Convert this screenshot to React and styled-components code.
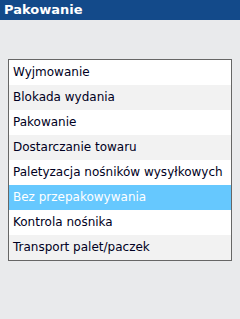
import React from 'react'
import styled, { createGlobalStyle } from 'styled-components'

const Global = createGlobalStyle`
  html, body {
    margin: 0;
    padding: 0;
    background: #e9eaec;
  }
`

const Page = styled.div`
  width: 240px;
  height: 319px;
  background: #e9eaec;
  font-family: "DejaVu Sans", Verdana, sans-serif;
`

const Header = styled.div`
  height: 20px;
  background: #134a8a;
  color: #ffffff;
  font-weight: bold;
  font-size: 13px;
  line-height: 20px;
  padding-left: 4px;
`

const Body = styled.div`
  padding: 39px 8px 0 8px;
`

const List = styled.div`
  border: 1px solid #666666;
  background: #ffffff;
  display: flex;
  flex-direction: column;
`

const Item = styled.div`
  height: 25px;
  line-height: 25px;
  padding-left: 4px;
  font-size: 12px;
  white-space: nowrap;
  overflow: hidden;
  color: ${p => (p.selected ? '#ffffff' : '#000022')};
  background: ${p => (p.selected ? '#66c8fe' : p.odd ? '#f2f2f2' : '#ffffff')};
`

const items = [
  'Wyjmowanie',
  'Blokada wydania',
  'Pakowanie',
  'Dostarczanie towaru',
  'Paletyzacja nośników wysyłkowych',
  'Bez przepakowywania',
  'Kontrola nośnika',
  'Transport palet/paczek',
]

const App = () => {
  return (
    <Page>
      <Global />
      <Header>Pakowanie</Header>
      <Body>
        <List>
          {items.map((name, i) => (
            <Item key={name} odd={i % 2 === 1} selected={i === 5}>
              {name}
            </Item>
          ))}
        </List>
      </Body>
    </Page>
  )
}

export default App
